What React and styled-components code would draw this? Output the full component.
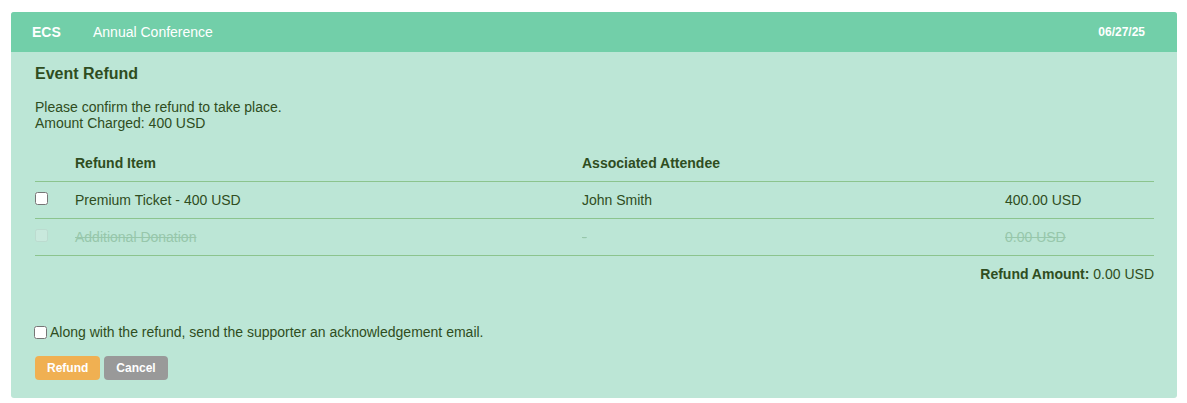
import styled, { createGlobalStyle } from "styled-components";

const GlobalStyle = createGlobalStyle`
  body {
    margin: 0;
    padding: 12px 10px 6px 11px;
    font-family: "Liberation Sans", Arial, sans-serif;
    background: #ffffff;
  }
`

const Card = styled.div`
  background-color: #bce6d6;
  border-radius: 3px;
  overflow: hidden;
  color: #2f4d21;
`

const TopBar = styled.div`
  background-color: #72cfa9;
  height: 40px;
  display: flex;
  align-items: center;
  padding: 0 32px 0 21px;
  color: #ffffff;
`

const Brand = styled.span`
  font-weight: bold;
  font-size: 14px;
  width: 61px;
`

const EventName = styled.span`
  font-size: 14px;
  flex: 1;
`

const DateText = styled.span`
  font-weight: bold;
  font-size: 12px;
`

const Body = styled.div`
  padding: 13px 23px 18px 24px;
`

const Title = styled.h2`
  margin: 0 0 16px;
  font-size: 16px;
  line-height: 18px;
  font-weight: bold;
`

const Intro = styled.p`
  margin: 0 0 14px;
  font-size: 14px;
  line-height: 16px;
`

const Row = styled.div`
  display: grid;
  grid-template-columns: 40px 507px 423px 1fr;
  align-items: center;
  height: 36px;
  border-bottom: 1px solid #8cc48e;
  font-size: 14px;
  font-weight: ${(p) => (p.head ? "bold" : "normal")};
  color: ${(p) => (p.disabled ? "#97c7ab" : "inherit")};
  text-decoration: ${(p) => (p.disabled ? "line-through" : "none")};
`

const Box = styled.input`
  margin: 0;
  width: 13px;
  height: 13px;
  opacity: ${(p) => (p.disabled ? 0.35 : 1)};
`

const Total = styled.div`
  text-align: right;
  font-size: 14px;
  line-height: 16px;
  padding-top: 10px;
  b {
    font-weight: bold;
  }
`

const EmailOption = styled.label`
  display: flex;
  align-items: center;
  gap: 3px;
  margin-top: 42px;
  margin-left: -1px;
  font-size: 14px;
`

const Actions = styled.div`
  display: flex;
  gap: 4px;
  margin-top: 16px;
`

const Button = styled.button`
  border: none;
  border-radius: 4px;
  height: 24px;
  padding: 0 12px;
  font-family: inherit;
  font-weight: bold;
  font-size: 12px;
  color: #ffffff;
  background-color: ${(p) => p.bg};
`

const items = [
  { name: "Premium Ticket - 400 USD", attendee: "John Smith", amount: "400.00 USD" },
  { name: "Additional Donation", attendee: "-", amount: "0.00 USD", disabled: true },
]

const App = () => {
  return (
    <>
      <GlobalStyle />
      <Card>
        <TopBar>
          <Brand>ECS</Brand>
          <EventName>Annual Conference</EventName>
          <DateText>06/27/25</DateText>
        </TopBar>
        <Body>
          <Title>Event Refund</Title>
          <Intro>
            Please confirm the refund to take place.
            <br />
            Amount Charged: 400 USD
          </Intro>
          <Row head>
            <span />
            <span>Refund Item</span>
            <span>Associated Attendee</span>
            <span />
          </Row>
          {items.map((item) => (
            <Row key={item.name} disabled={item.disabled}>
              <span><Box type="checkbox" disabled={item.disabled} /></span>
              <span>{item.name}</span>
              <span>{item.attendee}</span>
              <span>{item.amount}</span>
            </Row>
          ))}
          <Total>
            <b>Refund Amount:</b> 0.00 USD
          </Total>
          <EmailOption>
            <Box type="checkbox" />
            Along with the refund, send the supporter an acknowledgement email.
          </EmailOption>
          <Actions>
            <Button bg="#f0b052">Refund</Button>
            <Button bg="#999999">Cancel</Button>
          </Actions>
        </Body>
      </Card>
    </>
  )
}

export default App;
